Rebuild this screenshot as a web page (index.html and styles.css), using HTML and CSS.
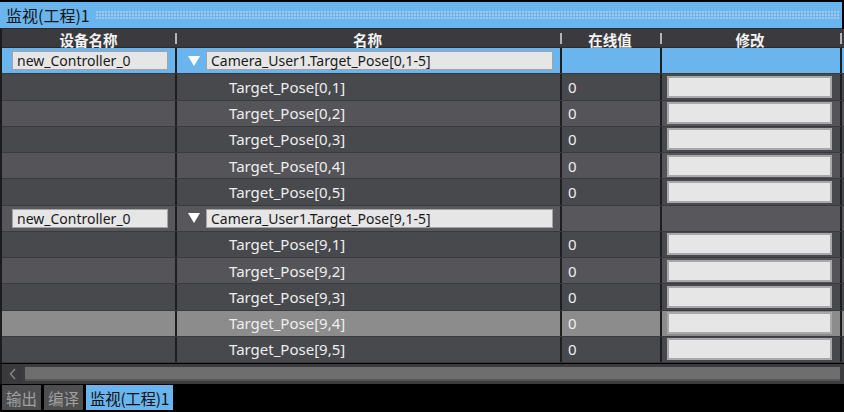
FILE: index.html
```html
<!DOCTYPE html>
<html lang="zh-CN">
  <head>
    <meta charset="UTF-8" />
    <meta name="viewport" content="width=device-width, initial-scale=1.0" />
    <title>监视(工程)1</title>
    <link rel="stylesheet" href="styles.css">
  </head>
  <body>
    <div class="panel">
      <div class="title-bar">
        <span class="title">监视(工程)1</span>
        <span class="title-dots"></span>
      </div>

      <div class="watch">
        <div class="row head">
          <div class="cell">设备名称</div>
          <div class="cell">名称</div>
          <div class="cell">在线值</div>
          <div class="cell">修改</div>
          <div class="cell"></div>
        </div>

        <div class="row group active">
          <div class="cell"><span class="box device">new_Controller_0</span></div>
          <div class="cell"><span class="caret"></span><span class="box name">Camera_User1.Target_Pose[0,1-5]</span></div>
          <div class="cell"></div>
          <div class="cell"></div>
          <div class="cell"></div>
        </div>
        <div class="row child">
          <div class="cell"></div>
          <div class="cell">Target_Pose[0,1]</div>
          <div class="cell">0</div>
          <div class="cell"><span class="box edit"></span></div>
          <div class="cell"></div>
        </div>
        <div class="row child alt">
          <div class="cell"></div>
          <div class="cell">Target_Pose[0,2]</div>
          <div class="cell">0</div>
          <div class="cell"><span class="box edit"></span></div>
          <div class="cell"></div>
        </div>
        <div class="row child">
          <div class="cell"></div>
          <div class="cell">Target_Pose[0,3]</div>
          <div class="cell">0</div>
          <div class="cell"><span class="box edit"></span></div>
          <div class="cell"></div>
        </div>
        <div class="row child alt">
          <div class="cell"></div>
          <div class="cell">Target_Pose[0,4]</div>
          <div class="cell">0</div>
          <div class="cell"><span class="box edit"></span></div>
          <div class="cell"></div>
        </div>
        <div class="row child">
          <div class="cell"></div>
          <div class="cell">Target_Pose[0,5]</div>
          <div class="cell">0</div>
          <div class="cell"><span class="box edit"></span></div>
          <div class="cell"></div>
        </div>

        <div class="row group">
          <div class="cell"><span class="box device">new_Controller_0</span></div>
          <div class="cell"><span class="caret"></span><span class="box name">Camera_User1.Target_Pose[9,1-5]</span></div>
          <div class="cell"></div>
          <div class="cell"></div>
          <div class="cell"></div>
        </div>
        <div class="row child">
          <div class="cell"></div>
          <div class="cell">Target_Pose[9,1]</div>
          <div class="cell">0</div>
          <div class="cell"><span class="box edit"></span></div>
          <div class="cell"></div>
        </div>
        <div class="row child alt">
          <div class="cell"></div>
          <div class="cell">Target_Pose[9,2]</div>
          <div class="cell">0</div>
          <div class="cell"><span class="box edit"></span></div>
          <div class="cell"></div>
        </div>
        <div class="row child">
          <div class="cell"></div>
          <div class="cell">Target_Pose[9,3]</div>
          <div class="cell">0</div>
          <div class="cell"><span class="box edit"></span></div>
          <div class="cell"></div>
        </div>
        <div class="row child selected">
          <div class="cell"></div>
          <div class="cell">Target_Pose[9,4]</div>
          <div class="cell">0</div>
          <div class="cell"><span class="box edit"></span></div>
          <div class="cell"></div>
        </div>
        <div class="row child">
          <div class="cell"></div>
          <div class="cell">Target_Pose[9,5]</div>
          <div class="cell">0</div>
          <div class="cell"><span class="box edit"></span></div>
          <div class="cell"></div>
        </div>
      </div>

      <div class="hscroll">
        <div class="arrow">
          <svg width="8" height="12" viewBox="0 0 8 12"><path d="M6 1 L1.5 6 L6 11" fill="none" stroke="#8a8a8a" stroke-width="1.3"/></svg>
        </div>
        <div class="track"></div>
      </div>

      <div class="tabs">
        <span class="tab">输出</span>
        <span class="tab">编译</span>
        <span class="tab current">监视(工程)1</span>
      </div>
    </div>
  </body>
</html>
```

FILE: styles.css
```css
* {
  box-sizing: border-box;
}

html,
body {
  margin: 0;
  height: 100%;
  background: #000;
}

body {
  font-family: "Noto Sans", "Noto Sans CJK SC", sans-serif;
  font-size: 15px;
}

.panel {
  width: 844px;
  height: 412px;
  display: flex;
  flex-direction: column;
  background: #000;
  overflow: hidden;
}

.title-bar {
  height: 27px;
  margin-top: 2px;
  margin-right: 2px;
  display: flex;
  align-items: center;
  gap: 6px;
  padding-left: 6px;
  background: #6ab5ee;
  border-bottom: 1px solid #2c2c30;
  color: #161616;
  font-family: "Noto Sans CJK SC", sans-serif;
  font-size: 16px;
}

.title-dots {
  flex: 1;
  height: 8px;
  margin-right: 2px;
  background-image: radial-gradient(circle at 1px 1px, #a3c8e6 0.9px, transparent 1.3px);
  background-size: 3px 3px;
}

.watch {
  border-left: 2px solid #1c1c1e;
}

.row {
  display: grid;
  grid-template-columns: 173px 385px 100px 180px 1fr;
  height: 26.25px;
  border-bottom: 1px solid #3a3a3d;
  color: #eeeeee;
}

.row .cell {
  display: flex;
  align-items: center;
  min-width: 0;
  white-space: nowrap;
}

.row .cell + .cell {
  border-left: 2px solid #1e1e20;
}

.head {
  height: 19px;
  background: #3b3b3f;
  border-bottom: 1px solid #2a2a2d;
  font-family: "Noto Sans CJK SC", sans-serif;
  font-weight: bold;
  font-size: 14.5px;
  color: #f4f4f4;
}

.head .cell {
  justify-content: center;
}

.head .cell + .cell {
  border-left: none;
  position: relative;
}

.head .cell + .cell::before {
  content: "";
  position: absolute;
  left: 0;
  top: 4px;
  width: 2px;
  height: 11px;
  background: #b4b4b8;
}

.child {
  background: #48494d;
}

.child.alt {
  background: #555559;
}

.child.selected {
  background: #8c8c8c;
}

.child .cell:nth-child(2) {
  padding-left: 52px;
}

.child .cell:nth-child(3) {
  padding-left: 6px;
}

.child .cell:nth-child(4) {
  padding-left: 5px;
}

.group {
  background: #58585c;
}

.group.active {
  background: #6ab5ee;
}

.group .cell:first-child {
  padding-left: 10px;
}

.group .cell:nth-child(2) {
  padding-left: 11px;
  gap: 6px;
}

.box {
  display: block;
  background: #e6e6e7;
  border: 1px solid #a3a3a6;
  color: #1a1a1a;
}

.box.device,
.box.name {
  height: 19px;
  line-height: 17px;
  padding-left: 4px;
  font-size: 14px;
}

.box.device {
  width: 156px;
}

.box.name {
  width: 347px;
}

.box.edit {
  width: 165px;
  height: 22px;
  border: 2px solid #a8a8aa;
}

.caret {
  width: 0;
  height: 0;
  border-left: 6px solid transparent;
  border-right: 6px solid transparent;
  border-top: 10px solid #fff;
}

.hscroll {
  height: 20px;
  margin-top: 1px;
  display: flex;
  border-left: 2px solid #1c1c1e;
  background: #3c3c3e;
}

.arrow {
  width: 21px;
  display: flex;
  align-items: center;
  justify-content: center;
  background: #3a3a3c;
}

.track {
  flex: 1;
  margin: 3px 4px 3px 2px;
  background: #6e6e6e;
  border-bottom: 2px solid #555;
}

.tabs {
  flex: 1;
  display: flex;
  align-items: stretch;
  gap: 3px;
  padding: 1px 0 2px 2px;
  font-family: "Noto Sans CJK SC", sans-serif;
  font-size: 15.5px;
}

.tab {
  display: flex;
  align-items: center;
  padding: 0 4px;
  background: #4e4e50;
  color: #a0a0a0;
}

.tab.current {
  background: #6ab5ee;
  color: #121212;
  letter-spacing: -0.3px;
}
```
